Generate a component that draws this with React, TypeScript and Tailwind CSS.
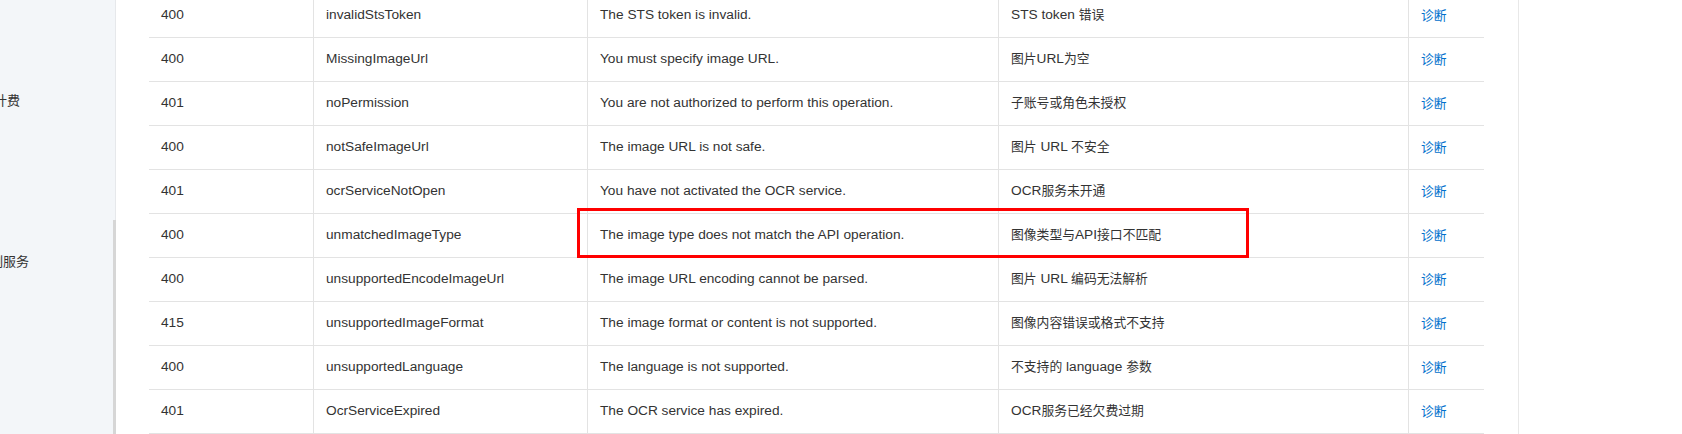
import React from "react";

interface ErrorRow {
  status: string;
  code: string;
  message: string;
  desc: string;
}

const rows: ErrorRow[] = [
  { status: "400", code: "invalidStsToken", message: "The STS token is invalid.", desc: "STS token 错误" },
  { status: "400", code: "MissingImageUrl", message: "You must specify image URL.", desc: "图片URL为空" },
  { status: "401", code: "noPermission", message: "You are not authorized to perform this operation.", desc: "子账号或角色未授权" },
  { status: "400", code: "notSafeImageUrl", message: "The image URL is not safe.", desc: "图片 URL 不安全" },
  { status: "401", code: "ocrServiceNotOpen", message: "You have not activated the OCR service.", desc: "OCR服务未开通" },
  { status: "400", code: "unmatchedImageType", message: "The image type does not match the API operation.", desc: "图像类型与API接口不匹配" },
  { status: "400", code: "unsupportedEncodeImageUrl", message: "The image URL encoding cannot be parsed.", desc: "图片 URL 编码无法解析" },
  { status: "415", code: "unsupportedImageFormat", message: "The image format or content is not supported.", desc: "图像内容错误或格式不支持" },
  { status: "400", code: "unsupportedLanguage", message: "The language is not supported.", desc: "不支持的 language 参数" },
  { status: "401", code: "OcrServiceExpired", message: "The OCR service has expired.", desc: "OCR服务已经欠费过期" },
];

const font = { fontFamily: '"Liberation Sans", "Noto Sans CJK SC", sans-serif' };

// chinese glyphs run a bit narrower than the latin ones in the original
const Mixed: React.FC<{ text: string }> = ({ text }) => {
  const parts = text.split(/([\u3000-\u9fff\uff00-\uffef]+)/);
  return (
    <span>
      {parts.map((part, i) =>
        /[\u3000-\u9fff\uff00-\uffef]/.test(part) ? (
          <span key={i} className="text-[12.8px]">{part}</span>
        ) : (
          <span key={i}>{part}</span>
        )
      )}
    </span>
  );
};

const Sidebar: React.FC = () => {
  return (
    <div className="flex w-[117px] shrink-0 bg-[#f3f6f9]">
      <div className="flex-1 overflow-hidden text-[13px] text-[#333]">
        <div className="mt-[91px] ml-[-6px] whitespace-nowrap">计费</div>
        <div className="mt-[141px] ml-[-10px] whitespace-nowrap">制服务</div>
      </div>
      <div className="flex w-[3px] flex-col">
        <div className="h-[220px] border-r border-[#e6e8eb]" />
        <div className="flex-1 bg-[#d6d6d6]" />
      </div>
      <div className="w-px bg-white" />
    </div>
  );
};

const App: React.FC = () => {
  return (
    <div className="relative flex h-[434px] w-[1682px] overflow-hidden bg-white text-[13.7px] text-[#333]" style={font}>
      <Sidebar />
      <div className="w-[1402px] shrink-0 border-r border-[#e8e8e8] pl-[32px]">
        <div className="mt-[-6px] w-[1335px]">
          {rows.map((row, index) => (
            <div
              key={index}
              className="grid h-[44px] grid-cols-[164px_274px_411px_410px_76px] border-b border-[#e3e3e3]"
            >
              <div className="flex items-center px-3">{row.status}</div>
              <div className="flex items-center border-l border-[#e3e3e3] px-3">{row.code}</div>
              <div className="flex items-center border-l border-[#e3e3e3] px-3">{row.message}</div>
              <div className="flex items-center border-l border-[#e3e3e3] px-3">
                <Mixed text={row.desc} />
              </div>
              <div className="flex items-center border-l border-[#e3e3e3] px-3">
                <a href="#" className="text-[12.8px] text-[#0070cc]">诊断</a>
              </div>
            </div>
          ))}
        </div>
      </div>
      <div className="flex-1" />
      {/* annotation box over the highlighted row */}
      <div className="pointer-events-none absolute left-[577px] top-[208px] h-[50px] w-[672px] border-[3px] border-[#ff0000]" />
    </div>
  );
};

export default App;
